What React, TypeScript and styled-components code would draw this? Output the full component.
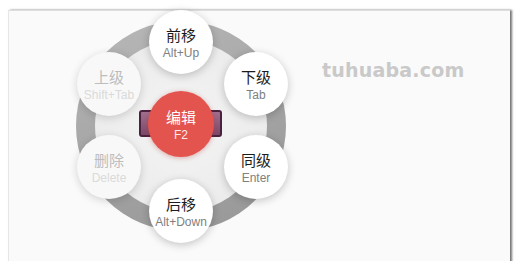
import * as React from 'react'
import styled, { createGlobalStyle } from 'styled-components'

const GlobalStyle = createGlobalStyle`
  html, body {
    margin: 0;
    padding: 0;
    background: #ffffff;
  }
  body {
    font-family: "Liberation Sans", "Noto Sans CJK SC", sans-serif;
  }
`

const Page = styled.div`
  width: 521px;
  height: 261px;
  overflow: hidden;
  padding: 10px 0 0 8px;
  box-sizing: border-box;
`

const Card = styled.div`
  width: 502px;
  height: 260px;
  box-sizing: border-box;
  display: flex;
  align-items: flex-start;
  padding: 10px 0 0 67px;
  background: #fafafa;
  border-top: 1px solid #dedede;
  border-left: 1px solid #e6e6e6;
  box-shadow: 2px 0 2px rgba(0, 0, 0, 0.55);
`

const Wheel = styled.div`
  position: relative;
  flex: none;
  width: 210px;
  height: 210px;
  border-radius: 50%;
  background: linear-gradient(160deg, #b9b9b9 0%, #a3a3a3 55%, #979797 100%);
`

const WheelInner = styled.div`
  position: absolute;
  inset: 19px;
  border-radius: 50%;
  background: radial-gradient(circle, #f4f4f4 0%, #ececec 70%, #e2e2e2 100%);
`

const Bar = styled.div`
  position: absolute;
  left: 63px;
  top: 89px;
  width: 83px;
  height: 27px;
  box-sizing: border-box;
  border: 2px solid #4b2140;
  border-radius: 3px;
  background: linear-gradient(180deg, #a06f8e 0%, #7d4868 100%);
`

type NodeProps = { $x: number; $y: number; $faded?: boolean }

const Node = styled.div<NodeProps>`
  position: absolute;
  left: ${({ $x }) => $x - 32}px;
  top: ${({ $y }) => $y - 32}px;
  width: 64px;
  height: 64px;
  border-radius: 50%;
  background: ${({ $faded }) => ($faded ? '#f8f8f8' : '#ffffff')};
  box-shadow: ${({ $faded }) =>
    $faded ? '0 2px 8px rgba(0, 0, 0, 0.16)' : '0 2px 9px rgba(0, 0, 0, 0.22)'};
  display: flex;
  flex-direction: column;
  align-items: center;
  justify-content: center;
  gap: 3px;
  color: ${({ $faded }) => ($faded ? '#bdbdbd' : '#1c1c1c')};
`

const CenterNode = styled.div`
  position: absolute;
  left: 72px;
  top: 70px;
  width: 66px;
  height: 66px;
  border-radius: 50%;
  background: #e4544f;
  box-shadow: 0 1px 5px rgba(180, 40, 40, 0.35);
  display: flex;
  flex-direction: column;
  align-items: center;
  justify-content: center;
  gap: 3px;
  color: #ffffff;
`

const Label = styled.div`
  font-family: "Noto Sans CJK SC", "Liberation Sans", sans-serif;
  font-size: 15px;
  line-height: 19px;
`

const Key = styled.div<{ $faded?: boolean; $light?: boolean }>`
  font-family: "Liberation Sans", Arial, sans-serif;
  font-size: 12px;
  line-height: 13px;
  color: ${({ $faded, $light }) => ($light ? '#ffe9e8' : $faded ? '#dadada' : '#808080')};
`

const Watermark = styled.div`
  margin: 38px 0 0 36px;
  font-family: "DejaVu Sans", "Liberation Sans", sans-serif;
  font-weight: bold;
  font-size: 19px;
  color: #c9c9c9;
  letter-spacing: 0.2px;
`

const nodes = [
  { label: '前移', key: 'Alt+Up', x: 105, y: 21 },
  { label: '上级', key: 'Shift+Tab', x: 33, y: 63, faded: true },
  { label: '下级', key: 'Tab', x: 180, y: 63 },
  { label: '删除', key: 'Delete', x: 33, y: 146, faded: true },
  { label: '同级', key: 'Enter', x: 180, y: 146 },
  { label: '后移', key: 'Alt+Down', x: 105, y: 190 },
]

const App: React.FC = () => {
  return (
    <>
      <GlobalStyle />
      <Page>
        <Card>
          <Wheel>
            <WheelInner />
            <Bar />
            {nodes.map((n) => (
              <Node key={n.label} $x={n.x} $y={n.y} $faded={n.faded}>
                <Label>{n.label}</Label>
                <Key $faded={n.faded}>{n.key}</Key>
              </Node>
            ))}
            <CenterNode>
              <Label>编辑</Label>
              <Key $light>F2</Key>
            </CenterNode>
          </Wheel>
          <Watermark>tuhuaba.com</Watermark>
        </Card>
      </Page>
    </>
  )
}

export default App
